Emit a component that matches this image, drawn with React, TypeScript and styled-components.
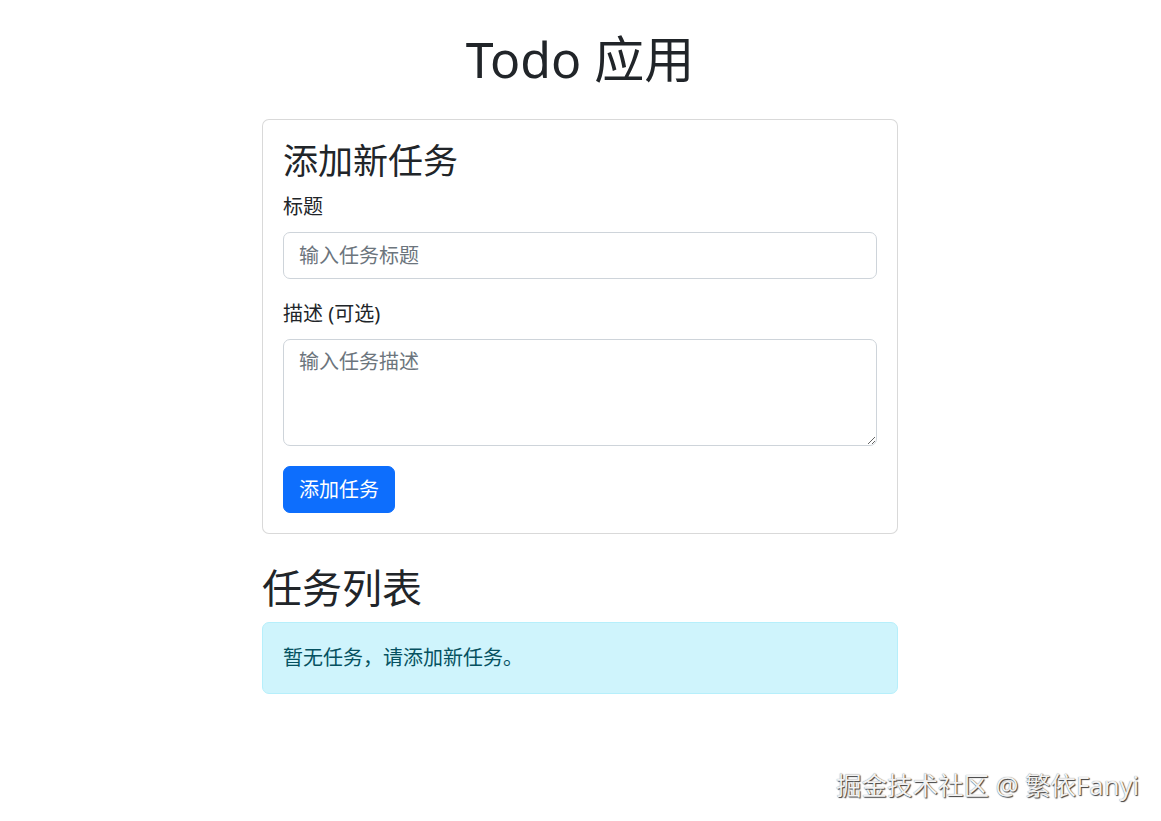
import React, { useState } from "react";
import styled, { createGlobalStyle } from "styled-components";

const GlobalStyle = createGlobalStyle`
  html, body {
    margin: 0;
    padding: 0;
    background: #fff;
  }
  body {
    font-family: "Noto Sans", "Noto Sans CJK SC", sans-serif;
    font-size: 20px;
    line-height: 1.5;
    color: #212529;
  }
  * {
    box-sizing: border-box;
  }
`;

const s = {
  Page: styled.div`
    position: relative;
    min-height: 821px;
  `,
  Container: styled.div`
    width: 636px;
    margin-left: calc(50% - 318.5px);
    padding-top: 29px;
  `,
  Title: styled.h1`
    margin: 0 0 30px 0;
    font-size: 50px;
    font-weight: 400;
    line-height: 1.2;
    text-align: center;
  `,
  Card: styled.div`
    border: 1px solid rgba(0, 0, 0, 0.15);
    border-radius: 7px;
    padding: 20px;
    background: #fff;
  `,
  CardTitle: styled.h3`
    margin: 0 0 10px 0;
    font-size: 35px;
    font-weight: 400;
    line-height: 1.2;
  `,
  Field: styled.div`
    margin-bottom: 20px;
  `,
  Label: styled.label`
    display: block;
    margin-bottom: 10px;
  `,
  Input: styled.input`
    display: block;
    width: 100%;
    height: 47px;
    padding: 7px 15px;
    font: inherit;
    color: #212529;
    border: 1px solid #ced4da;
    border-radius: 7px;
    outline: none;
    &::placeholder {
      color: #6c757d;
    }
  `,
  TextArea: styled.textarea`
    display: block;
    width: 100%;
    height: 107px;
    padding: 7px 15px;
    font: inherit;
    color: #212529;
    border: 1px solid #ced4da;
    border-radius: 7px;
    outline: none;
    resize: vertical;
    &::placeholder {
      color: #6c757d;
    }
  `,
  Button: styled.button`
    display: inline-block;
    height: 47px;
    padding: 7px 15px;
    font: inherit;
    color: #fff;
    background: #0d6efd;
    border: 1px solid #0d6efd;
    border-radius: 7px;
    cursor: pointer;
    vertical-align: top;
  `,
  SectionTitle: styled.h2`
    margin: 30px 0 10px 0;
    font-size: 40px;
    font-weight: 400;
    line-height: 1.2;
  `,
  Alert: styled.div`
    padding: 20px 20px;
    height: 72px;
    color: #055160;
    background: #cff4fc;
    border: 1px solid #b6effb;
    border-radius: 7px;
  `,
  Watermark: styled.div`
    position: absolute;
    right: 22px;
    bottom: 20px;
    font-size: 25.5px;
    line-height: 1.2;
    color: #f2f2f2;
    text-shadow: 1px 1px 1px rgba(0, 0, 0, 0.75), 0 0 1px rgba(0, 0, 0, 0.5);
    pointer-events: none;
  `,
};

const App: React.FC = () => {
  const [title, setTitle] = useState("");
  const [desc, setDesc] = useState("");

  return (
    <s.Page>
      <GlobalStyle />
      <s.Container>
        <s.Title>Todo 应用</s.Title>
        <s.Card>
          <s.CardTitle>添加新任务</s.CardTitle>
          <s.Field>
            <s.Label htmlFor="title">标题</s.Label>
            <s.Input
              id="title"
              placeholder="输入任务标题"
              value={title}
              onChange={e => setTitle(e.target.value)}
            />
          </s.Field>
          <s.Field>
            <s.Label htmlFor="desc">描述 (可选)</s.Label>
            <s.TextArea
              id="desc"
              rows={3}
              placeholder="输入任务描述"
              value={desc}
              onChange={e => setDesc(e.target.value)}
            />
          </s.Field>
          <s.Button type="button">添加任务</s.Button>
        </s.Card>
        <s.SectionTitle>任务列表</s.SectionTitle>
        <s.Alert>暂无任务，请添加新任务。</s.Alert>
      </s.Container>
      <s.Watermark>掘金技术社区 @ 繁依Fanyi</s.Watermark>
    </s.Page>
  );
};

export default App;
